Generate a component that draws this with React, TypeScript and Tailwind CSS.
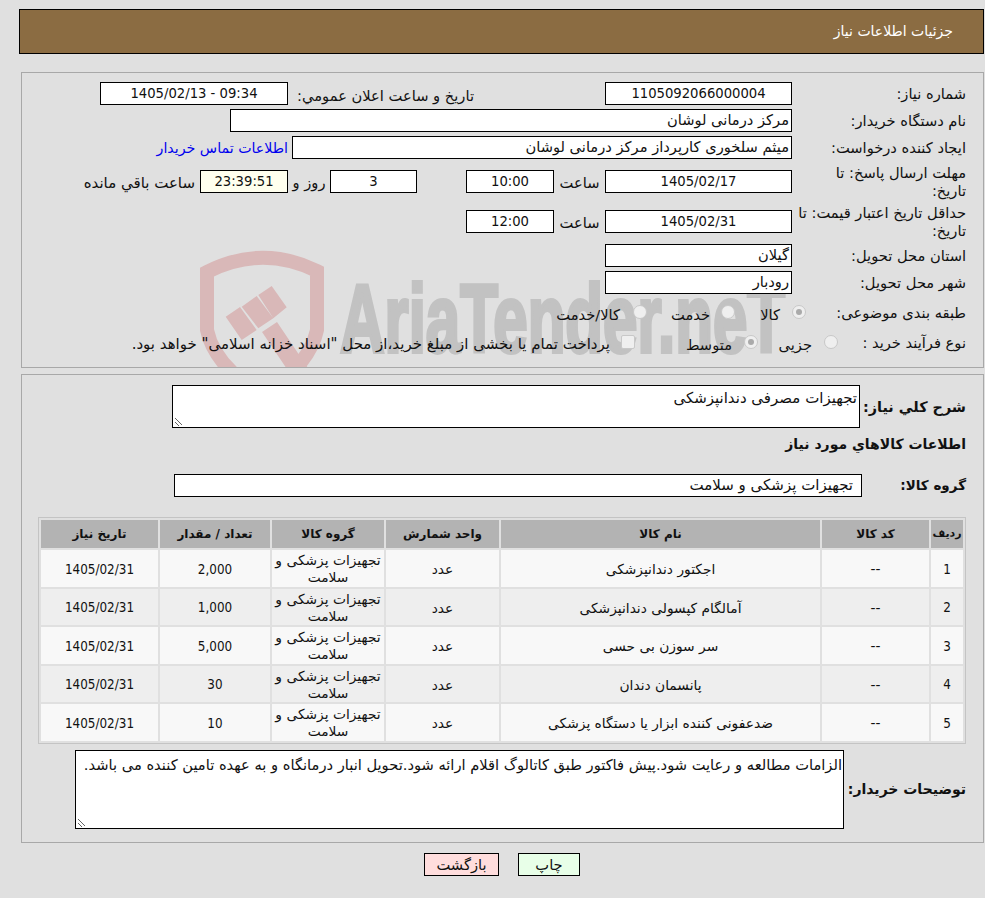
// جزئیات اطلاعات نیاز — صفحه نمایش نیاز
const ROWS = [
  { n: "1", name: "اجکتور دندانپزشکی", qty: "2,000" },
  { n: "2", name: "آمالگام کپسولی دندانپزشکی", qty: "1,000" },
  { n: "3", name: "سر سوزن بی حسی", qty: "5,000" },
  { n: "4", name: "پانسمان دندان", qty: "30" },
  { n: "5", name: "ضدعفونی کننده ابزار یا دستگاه پزشکی", qty: "10" },
];

const NUM = "font-['DejaVu_Sans_Condensed',sans-serif]";

function Box({ className = "", children }: { className?: string; children?: React.ReactNode }) {
  return (
    <div className={`flex h-[23px] shrink-0 items-center border border-black px-[2px] leading-none ${className}`}>
      {children}
    </div>
  );
}

function Label({ className = "w-[191px]", children }: { className?: string; children: React.ReactNode }) {
  return <div className={`shrink-0 pr-[17px] leading-[18px] whitespace-nowrap ${className}`}>{children}</div>;
}

function Radio({ checked = false }: { checked?: boolean }) {
  return (
    <span className="relative -mt-[3px] block h-[14px] w-[14px] shrink-0 rounded-full border border-[#c8c8c8] bg-[#efefef]">
      {checked && <span className="absolute top-[3px] left-[3px] h-[6px] w-[6px] rounded-full bg-[#aaaaaa]" />}
    </span>
  );
}

function Grip() {
  return (
    <svg className="absolute bottom-[1px] left-[1px]" width="9" height="9" viewBox="0 0 9 9" fill="none" stroke="#666" strokeWidth="1">
      <path d="M1 1l7 7M1 5l4 4" />
    </svg>
  );
}

function Watermark() {
  return (
    <svg className="pointer-events-none absolute top-[167px] left-[168px]" width="620" height="170" viewBox="0 0 620 170" fill="none">
      <path d="M17 32 Q72 4 127 31 L127 90 Q120 125 72 155 Q24 125 17 90 Z" stroke="#d9b8b8" strokeWidth="14" />
      <path d="M35.7 76.7L50 67 66.7 90 51.7 100zM51.7 66.7L66.7 56 83.3 78.3 68.3 88.3zM68.3 55L81.7 46 96.7 67.3 83.3 78.3zM72 92L87 82 118 128 103 138z" fill="#d9b8b8" />
      <text x="150" y="112" direction="ltr" fill="#c2c2c2" stroke="#c2c2c2" strokeWidth="4" fontFamily="'Liberation Sans', sans-serif" fontWeight="700" fontSize="96" textLength="445" lengthAdjust="spacingAndGlyphs">AriaTender.neT</text>
    </svg>
  );
}

export default function App() {
  return (
    <div dir="rtl" className="h-[898px] w-[985px] overflow-hidden bg-[#e0e0e0] font-['DejaVu_Sans',sans-serif] text-[14.67px] text-[#111]">
      <div className="pt-[9px] pr-px pl-[19px]">
        <div className="flex h-[45px] items-center border border-black bg-[#8b6c42] pr-[30px] text-[14px] text-white">جزئیات اطلاعات نیاز</div>
      </div>

      <section className="relative mt-[18px] mr-px ml-[21px] h-[296px] overflow-hidden border border-[#a8a8a8]">
        <Watermark />
        <div className="relative pt-[9px]">
          <div className="flex h-[27px] items-start">
            <Label className="w-[191px] pt-[3px]">شماره نیاز:</Label>
            <Box className={`w-[187px] justify-center bg-white ${NUM}`}>1105092066000004</Box>
            <div className="w-[317px] shrink-0 pt-[3px] pr-[131px] whitespace-nowrap">تاریخ و ساعت اعلان عمومي:</div>
            <Box className={`w-[188px] justify-center bg-white ${NUM}`}><span dir="ltr">1405/02/13 - 09:34</span></Box>
          </div>
          <div className="flex h-[27px] items-start">
            <Label className="w-[191px] pt-[3px]">نام دستگاه خریدار:</Label>
            <Box className="w-[562px] bg-white">مرکز درمانی لوشان</Box>
          </div>
          <div className="flex h-[27px] items-start">
            <Label className="w-[191px] pt-[3px]">ایجاد کننده درخواست:</Label>
            <Box className="w-[500px] bg-white">میثم سلخوری کارپرداز مرکز درمانی لوشان</Box>
            <div className="pt-[2px] pr-[4px] text-[14.2px] whitespace-nowrap text-[#0000ee]">اطلاعات تماس خریدار</div>
          </div>
          <div className="flex h-[40px] items-start">
            <Label className="w-[191px] pt-[1px]">مهلت ارسال پاسخ: تا<br />تاریخ:</Label>
            <div className="mt-[7px] flex items-start">
              <Box className={`w-[187px] justify-center bg-white ${NUM}`}>1405/02/17</Box>
              <div className="w-[51px] pt-[2px] text-center">ساعت</div>
              <Box className={`w-[88px] justify-center bg-white ${NUM}`}>10:00</Box>
              <div className="w-[49px]" />
              <Box className={`w-[87px] justify-center bg-white ${NUM}`}>3</Box>
              <div className="w-[42px] pt-[2px] text-center">روز و</div>
              <Box className={`w-[88px] justify-center bg-[#ffffee] ${NUM}`}>23:39:51</Box>
              <div className="pt-[2px] pr-[5px] text-[15px] whitespace-nowrap">ساعت باقي مانده</div>
            </div>
          </div>
          <div className="flex h-[41px] items-start">
            <Label className="w-[191px] pt-[1px]">حداقل تاریخ اعتبار قیمت: تا<br />تاریخ:</Label>
            <div className="mt-[7px] flex items-start">
              <Box className={`w-[187px] justify-center bg-white ${NUM}`}>1405/02/31</Box>
              <div className="w-[51px] pt-[2px] text-center">ساعت</div>
              <Box className={`w-[88px] justify-center bg-white ${NUM}`}>12:00</Box>
            </div>
          </div>
          <div className="flex h-[27px] items-start">
            <Label className="w-[191px] pt-[3px]">استان محل تحویل:</Label>
            <Box className="w-[187px] bg-white">گیلان</Box>
          </div>
          <div className="flex h-[27px] items-start">
            <Label className="w-[191px] pt-[3px]">شهر محل تحویل:</Label>
            <Box className="w-[187px] bg-white">رودبار</Box>
          </div>
          <div className="flex h-[30px] items-center">
            <Label className="w-[177px]">طبقه بندی موضوعی:</Label>
            <Radio checked />
            <div className="w-[57px] pt-[3px] pr-[12px]">کالا</div>
            <Radio />
            <div className="w-[74px] pt-[3px] pr-[11px]">خدمت</div>
            <Radio />
            <div className="pt-[3px] pr-[13px]">کالا/خدمت</div>
          </div>
          <div className="flex h-[30px] items-center">
            <Label className="w-[145px]">نوع فرآیند خرید :</Label>
            <Radio />
            <div className="w-[66px] pt-[3px] pr-[12px]">جزیی</div>
            <Radio checked />
            <div className="w-[109px] pt-[3px] pr-[12px]">متوسط</div>
            <span className="-mt-[3px] block h-[14px] w-[14px] shrink-0 rounded-[2px] border border-[#c8c8c8] bg-[#efefef]" />
            <div className="pt-[3px] pr-[11px] text-[15px] whitespace-nowrap">پرداخت تمام یا بخشی از مبلغ خرید،از محل "اسناد خزانه اسلامی" خواهد بود.</div>
          </div>
        </div>
      </section>

      <section className="mt-[6px] mr-px ml-[21px] h-[469px] border border-[#a8a8a8]">
        <div className="flex h-[53px] items-start pt-[10px]">
          <div className="w-[123px] shrink-0 pt-[12px] pr-[17px] text-[14.4px] font-bold whitespace-nowrap">شرح کلي نیاز:</div>
          <div className="relative h-[43px] w-[688px] border border-black bg-white px-[2px] pt-[1px] text-[15px]">
            تجهیزات مصرفی دندانپزشکی
            <Grip />
          </div>
        </div>
        <div className="mt-[6px] pr-[17px] text-[14px] font-bold">اطلاعات کالاهاي مورد نیاز</div>
        <div className="mt-[19px] flex items-center">
          <div className="w-[121px] shrink-0 pr-[17px] text-[13.5px] font-bold">گروه کالا:</div>
          <Box className="w-[688px] bg-white pr-[8px] text-[15px]">تجهیزات پزشکی و سلامت</Box>
        </div>

        <div className="mt-[20px] mr-[17px] ml-[16px] border border-[#c4c4c4]">
          <table className="w-full table-fixed border-separate border-spacing-[2px] text-center text-[13.8px]">
            <thead>
              <tr className="h-[28px] bg-[#b3b3b3] text-[12px] font-bold">
                <th className="w-[32px] text-[11px] font-bold">ردیف</th>
                <th className="w-[107px]">کد کالا</th>
                <th className="w-[319px]">نام کالا</th>
                <th className="w-[113px]">واحد شمارش</th>
                <th className="w-[112px]">گروه کالا</th>
                <th className="w-[110px]">تعداد / مقدار</th>
                <th>تاریخ نیاز</th>
              </tr>
            </thead>
            <tbody>
              {ROWS.map((r, i) => (
                <tr key={r.n} className={i % 2 ? "h-[36px] bg-[#eeeeee]" : "h-[37px] bg-[#f8f8f8]"}>
                  <td className={`pt-[2px] text-[13.33px] ${NUM}`}>{r.n}</td>
                  <td className="pt-[2px]">--</td>
                  <td className="pt-[2px]">{r.name}</td>
                  <td className="pt-[2px]">عدد</td>
                  <td className="pt-[1px] leading-[17px]">تجهیزات پزشکی و سلامت</td>
                  <td className={`pt-[2px] text-[13.33px] ${NUM}`}>{r.qty}</td>
                  <td className={`pt-[2px] text-[13.33px] ${NUM}`}>1405/02/31</td>
                </tr>
              ))}
            </tbody>
          </table>
        </div>

        <div className="mt-[6px] flex items-center">
          <div className="w-[139px] shrink-0 pr-[17px] text-[14px] font-bold whitespace-nowrap">توضیحات خریدار:</div>
          <div className="relative h-[79px] w-[769px] border border-black bg-white px-[1px] pt-[3px] whitespace-nowrap">
            الزامات مطالعه و رعایت شود.پیش فاکتور طبق کاتالوگ اقلام ارائه شود.تحویل انبار درمانگاه و به عهده تامین کننده می باشد.
            <Grip />
          </div>
        </div>
      </section>

      <div dir="ltr" className="mt-[10px] flex gap-[19px] pl-[424px]">
        <button className="h-[23px] w-[75px] border border-black bg-[#ffdddd] text-center">بازگشت</button>
        <button className="h-[23px] w-[62px] border border-black bg-[#e8ffe8] text-center">چاپ</button>
      </div>
    </div>
  );
}
